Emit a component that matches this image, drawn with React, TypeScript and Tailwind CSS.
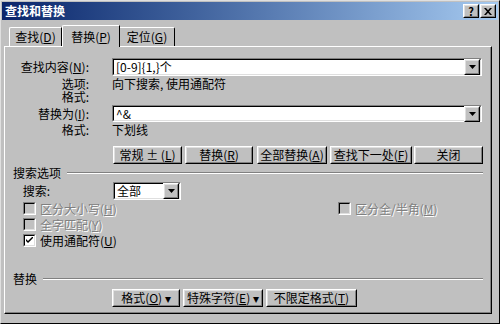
import React from "react";

const font = { fontFamily: '"Noto Sans CJK SC", "Liberation Sans", sans-serif' };

function Raised({ className = "", children }: { className?: string; children?: React.ReactNode }) {
  return (
    <div className={`border border-t-white border-l-white border-r-black border-b-black bg-[#c0c0c0] ${className}`}>
      <div className="w-full h-full border border-t-[#dfdfdf] border-l-[#dfdfdf] border-r-[#808080] border-b-[#808080] flex items-center justify-center">
        {children}
      </div>
    </div>
  );
}

function Btn({ children, className = "" }: { children: React.ReactNode; className?: string }) {
  return (
    <Raised className={`h-[18px] text-[12px] leading-none text-black ${className}`}>
      <span className="whitespace-nowrap">{children}</span>
    </Raised>
  );
}

function Arrow() {
  return (
    <Raised className="w-[16px] h-[16px]">
      <svg width="7" height="4" viewBox="0 0 7 4">
        <path d="M0 0h7L3.5 4z" fill="#000" />
      </svg>
    </Raised>
  );
}

function Combo({ value, className = "" }: { value: string; className?: string }) {
  return (
    <div className={`border border-t-[#808080] border-l-[#808080] border-r-white border-b-white ${className}`}>
      <div className="h-full border border-t-black border-l-black border-r-[#dfdfdf] border-b-[#dfdfdf] bg-white flex items-center">
        <span className="flex-1 pl-[2px] text-[12px] leading-none whitespace-nowrap">{value}</span>
        <Arrow />
      </div>
    </div>
  );
}

function Check({ label, checked, disabled }: { label: React.ReactNode; checked?: boolean; disabled?: boolean }) {
  return (
    <div className="flex items-center gap-[4px] h-[15px]">
      <div className="w-[13px] h-[13px] border border-t-[#808080] border-l-[#808080] border-r-white border-b-white">
        <div className={`w-full h-full border border-t-black border-l-black border-r-[#dfdfdf] border-b-[#dfdfdf] ${disabled ? "bg-[#c0c0c0]" : "bg-white"} flex items-center justify-center`}>
          {checked && (
            <svg width="7" height="7" viewBox="0 0 7 7">
              <path d="M0 2l2 2 5-5v2L2 6 0 4z" fill="#000" />
            </svg>
          )}
        </div>
      </div>
      <span className={`text-[12px] leading-none whitespace-nowrap ${disabled ? "text-[#808080] [text-shadow:1px_1px_0_#fff]" : "text-black"}`}>{label}</span>
    </div>
  );
}

function Group({ title }: { title: string }) {
  return (
    <div className="flex items-center gap-[6px] ml-[8px] mr-[7px] h-[12px]">
      <span className="text-[12px] leading-none">{title}</span>
      <div className="flex-1 h-[2px] border-t border-t-[#808080] border-b border-b-white" />
    </div>
  );
}

export default function App() {
  return (
    <div style={font} className="w-[500px] h-[324px] bg-[#c0c0c0] border border-t-[#dfdfdf] border-l-[#dfdfdf] border-r-black border-b-black flex flex-col text-black select-none">
      <div className="h-[18px] mx-[1px] mt-[1px] bg-gradient-to-r from-[#0a246a] to-[#a6caf0] flex items-center pl-[3px] pr-[2px]">
        <span className="text-white text-[12px] font-bold leading-none flex-1">查找和替换</span>
        <Raised className="w-[16px] h-[14px]">
          <span className="text-[11px] font-bold leading-none">?</span>
        </Raised>
        <Raised className="w-[16px] h-[14px] ml-[1px]">
          <svg width="8" height="7" viewBox="0 0 8 7">
            <path d="M0 0h2l2 2.3L6 0h2L5 3.5 8 7H6L4 4.7 2 7H0l3-3.5z" fill="#000" />
          </svg>
        </Raised>
      </div>

      <div className="flex items-end pl-[8px] mt-[4px] h-[22px]">
        <div className="h-[19px] w-[53px] border-t border-l border-t-white border-l-white border-r border-r-black rounded-tl-[2px] flex items-center justify-center text-[12px] leading-none">
          查找(<u>D</u>)
        </div>
        <div className="h-[22px] w-[58px] -mb-[1px] bg-[#c0c0c0] relative z-10 border-t border-l border-t-white border-l-white border-r border-r-black rounded-tl-[2px] flex items-center justify-center text-[12px] leading-none">
          替换(<u>P</u>)
        </div>
        <div className="h-[19px] w-[55px] border-t border-t-white border-r border-r-black rounded-tr-[2px] flex items-center justify-center text-[12px] leading-none">
          定位(<u>G</u>)
        </div>
      </div>

      <div className="ml-[3px] mr-[7px] mb-[9px] flex-1 border border-t-white border-l-white border-r-black border-b-black">
        <div className="h-full border-r border-b border-r-[#808080] border-b-[#808080] flex flex-col">
          <div className="flex items-center mt-[11px] h-[18px]">
            <div className="w-[84px] text-right text-[12px] leading-none">查找内容(<u>N</u>):</div>
            <Combo value="[0-9]{1,}个" className="ml-[23px] w-[370px] h-[18px]" />
          </div>
          <div className="flex mt-[1px] text-[12px] leading-[13px]">
            <div className="w-[84px] text-right">选项:<br />格式:</div>
            <div className="ml-[23px]">向下搜索, 使用通配符</div>
          </div>
          <div className="flex items-center mt-[2px] h-[17px]">
            <div className="w-[84px] text-right text-[12px] leading-none">替换为(<u>I</u>):</div>
            <Combo value="^&" className="ml-[23px] w-[370px] h-[17px]" />
          </div>
          <div className="flex mt-[1px] text-[12px] leading-[14px]">
            <div className="w-[84px] text-right">格式:</div>
            <div className="ml-[23px]">下划线</div>
          </div>

          <div className="flex mt-[9px] ml-[108px]">
            <Btn className="w-[69px]">常规 ± (<u>L</u>)</Btn>
            <Btn className="w-[68px] ml-[3px]">替换(<u>R</u>)</Btn>
            <Btn className="w-[70px] ml-[4px]">全部替换(<u>A</u>)</Btn>
            <Btn className="w-[82px] ml-[3px]">查找下一处(<u>F</u>)</Btn>
            <Btn className="w-[69px] ml-[2px]">关闭</Btn>
          </div>

          <div className="mt-[3px]">
            <Group title="搜索选项" />
          </div>

          <div className="flex items-center mt-[3px] h-[18px]">
            <div className="w-[45px] text-right text-[12px] leading-none">搜索:</div>
            <Combo value="全部" className="ml-[63px] w-[68px] h-[18px]" />
          </div>

          <div className="flex mt-[1px] ml-[18px]">
            <div className="flex flex-col gap-[1px] w-[315px]">
              <Check label={<>区分大小写(<u>H</u>)</>} disabled />
              <Check label={<>全字匹配(<u>Y</u>)</>} disabled />
              <Check label={<>使用通配符(<u>U</u>)</>} checked />
            </div>
            <Check label={<>区分全/半角(<u>M</u>)</>} disabled />
          </div>

          <div className="flex-1" />
          <Group title="替换" />
          <div className="flex mt-[4px] mb-[5px] ml-[107px]">
            <Btn className="w-[68px]">格式(<u>O</u>) ▾</Btn>
            <Btn className="w-[80px] ml-[3px]">特殊字符(<u>E</u>) ▾</Btn>
            <Btn className="w-[91px] ml-[3px]">不限定格式(<u>T</u>)</Btn>
          </div>
        </div>
      </div>
    </div>
  );
}
